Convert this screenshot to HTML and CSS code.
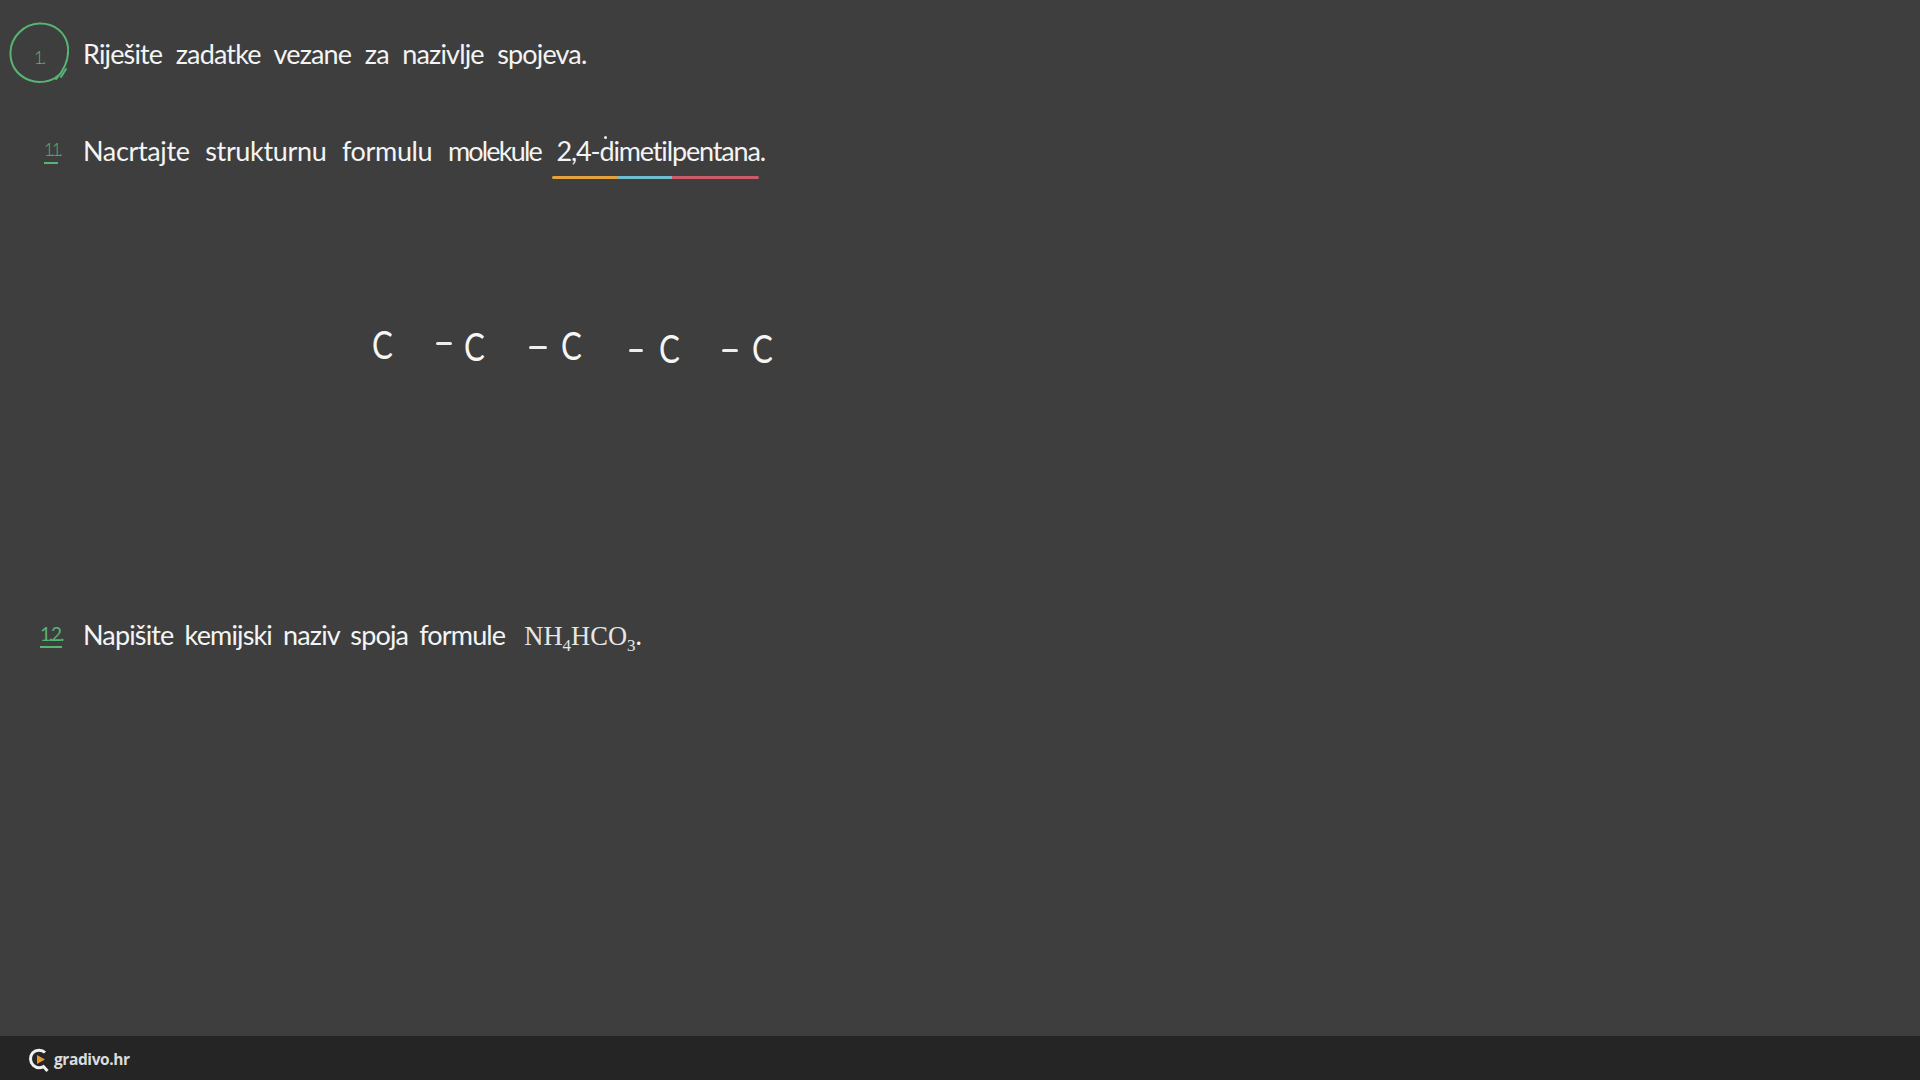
FILE: index.html
```html
<!DOCTYPE html>
<html lang="hr">
<head>
<meta charset="utf-8">
<title>Nazivlje spojeva</title>
<link rel="stylesheet" href="styles.css">
</head>
<body>
<main class="board">
  <section class="task task-head">
    <div class="circle">
      <svg class="circle-ring" viewBox="0 0 60 62" aria-hidden="true">
        <path d="M50 53C42 60 30 62 20 58C7 53 1 42 1.500 30C2 15 15 2 30 1.500C45 1 57 10 59 25C60 36 56 47 47 57"/>
        <path d="M52 55C54 52 55 50 57 47"/>
      </svg>
      <span class="num num-one">1.</span>
    </div>
    <p class="text text-1">Riješite zadatke vezane za nazivlje spojeva.</p>
  </section>

  <section class="task task-two">
    <span class="num num-u num-11">1.1.</span>
    <p class="text text-2">Nacrtajte strukturnu formulu <span class="tight">molekule</span> <span class="name">2,4-dimetilpentana.</span></p>
    <i class="dot"></i>
  </section>
  <div class="marks">
    <span class="mark mark-orange"></span>
    <span class="mark mark-blue"></span>
    <span class="mark mark-red"></span>
  </div>

  <div class="chain">
    <span class="atom a1">C</span>
    <span class="bond b1"></span>
    <span class="atom a2">C</span>
    <span class="bond b2"></span>
    <span class="atom a3">C</span>
    <span class="bond b3"></span>
    <span class="atom a4">C</span>
    <span class="bond b4"></span>
    <span class="atom a5">C</span>
  </div>

  <section class="task task-three">
    <span class="num num-u num-12">1.2.</span>
    <p class="text text-3">Napišite kemijski naziv spoja formule <span class="formula">NH<sub>4</sub>HCO<sub>3</sub></span>.</p>
  </section>
</main>
<footer class="footer">
  <svg class="logo" viewBox="0 0 20 24" aria-hidden="true">
    <path class="logo-g" d="M16 4.500C13 1.400 7 1.400 3.800 4.800C.6 8.200 .8 14.200 4.300 17.400C7.500 20.200 11.500 20.200 14.500 18.600L18.500 23"/>
    <path class="logo-play" d="M8 7L16 11.500L8 16Z"/>
  </svg>
  <span class="brand">gradivo.hr</span>
</footer>
</body>
</html>
```
FILE: styles.css
```css
* { box-sizing: border-box; }
html, body { margin: 0; height: 100%; }
body {
  width: 1920px;
  height: 1080px;
  overflow: hidden;
  display: flex;
  flex-direction: column;
  background: #3e3e3e;
  font-family: "Lato", "Noto Sans", sans-serif;
}
.board {
  flex: 1;
  display: flex;
  flex-direction: column;
  padding-top: 22px;
  color: #f4f4f4;
}
.task {
  display: flex;
  align-items: center;
  position: relative;
  height: 40px;
}
.task-head { height: 62px; padding-left: 9px; }
.task-two { margin-top: 47px; padding-left: 44px; }
.task-three { margin-top: 251px; padding-left: 40px; }
.circle {
  position: relative;
  width: 60px;
  height: 62px;
  margin-right: 14px;
  display: flex;
  align-items: center;
  justify-content: center;
  flex: none;
}
.circle-ring {
  position: absolute;
  left: 0;
  top: 0;
  width: 60px;
  height: 62px;
  fill: none;
  stroke: #58b474;
  stroke-width: 2;
  stroke-linecap: round;
}
.num {
  color: #58b474;
  font-size: 18px;
  font-weight: 300;
  line-height: 24px;
  letter-spacing: -2px;
}
.num-one { margin-top: 7px; }
.num-u { border-bottom: 2px solid #58b474; }
.num-11 { width: 14px; margin-right: 25px; font-size: 17px; white-space: nowrap; letter-spacing: -3px; }
.num-12 { width: 22px; margin-right: 21px; font-weight: 400; font-size: 19px; white-space: nowrap; letter-spacing: -2.200px; }
.text {
  margin: 0;
  font-size: 27px;
  font-weight: 400;
  line-height: 40px;
  white-space: nowrap;
}
.text-1 { letter-spacing: -0.85px; word-spacing: 7.500px; padding-top: 2px; }
.text-2 { letter-spacing: -0.35px; word-spacing: 9px; }
.text-3 { letter-spacing: -0.85px; word-spacing: 5px; }
.tight { letter-spacing: -1.800px; }
.name { letter-spacing: -1.150px; }
.formula {
  font-family: "Liberation Serif", serif;
  font-size: 26.500px;
  letter-spacing: 0;
  color: #e6e6e6;
  margin-left: 8px;
}
.formula sub { font-size: 17px; line-height: 0; }
.dot {
  position: absolute;
  left: 604px;
  top: 5px;
  width: 3px;
  height: 3px;
  border-radius: 50%;
  background: #eee;
}
.marks {
  display: flex;
  height: 3px;
  margin: 5px 0 0 552px;
}
.mark { display: block; height: 3px; }
.mark-orange { width: 65px; background: #e4a23f; border-radius: 2px 0 0 2px; }
.mark-blue { width: 55px; background: #70bccd; }
.mark-red { width: 87px; background: #c95b6b; border-radius: 0 2px 2px 0; }
.chain {
  display: flex;
  align-items: flex-start;
  height: 40px;
  margin: 145px 0 0 372px;
  color: #f6f6f6;
}
.atom {
  font-size: 38px;
  line-height: 40px;
  width: 22px;
  transform: scaleX(0.82);
  transform-origin: left center;
}
.a2 { margin: 2px 0 0 12px; }
.a3 { margin: 1px 0 0 14px; }
.a4 { margin: 4px 0 0 16px; }
.a5 { margin: 4px 0 0 14px; }
.bond { display: block; height: 3px; background: #eee; border-radius: 2px; }
.b1 { width: 16px; margin: 18px 0 0 42px; }
.b2 { width: 18px; margin: 22px 0 0 43px; }
.b3 { width: 14px; margin: 25px 0 0 46px; }
.b4 { width: 16px; margin: 25px 0 0 41px; }
.footer {
  flex: none;
  height: 44px;
  background: #252525;
  display: flex;
  align-items: center;
  padding-left: 29px;
  gap: 5px;
}
.logo { width: 20px; height: 24px; margin-top: 4px; }
.logo-g { fill: none; stroke: #f0f0f0; stroke-width: 3; }
.logo-play { fill: #e59a35; }
.brand {
  color: #dcdcdc;
  font-family: "Open Sans", sans-serif;
  font-weight: 700;
  font-size: 15.500px;
  line-height: 20px;
  letter-spacing: -0.4px;
  margin-top: 2px;
}
```
